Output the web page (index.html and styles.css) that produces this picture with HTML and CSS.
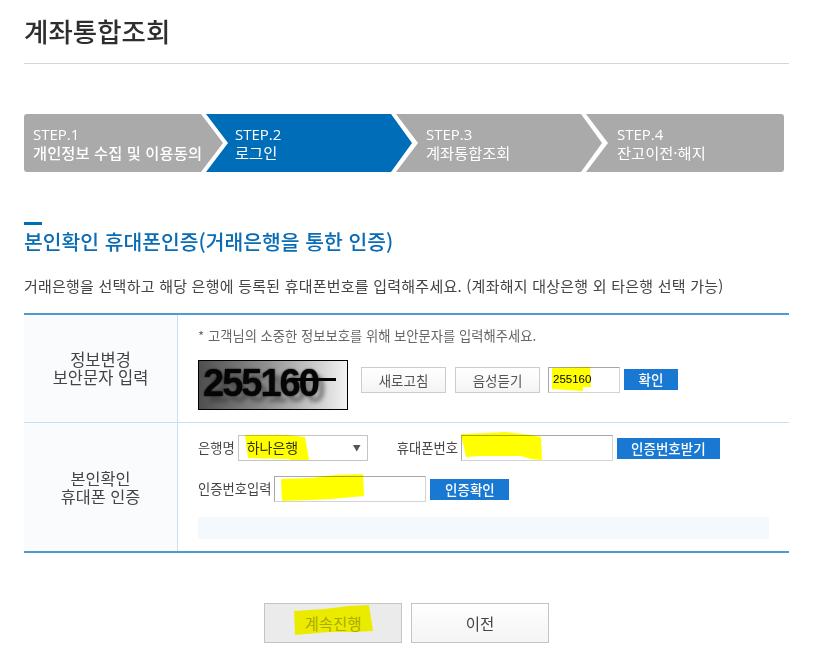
FILE: index.html
```html
<!DOCTYPE html>
<html lang="ko">
<head>
    <meta charset="UTF-8">
    <meta name="viewport" content="width=device-width, initial-scale=1.0">
    <title>계좌통합조회</title>
    <link rel="stylesheet" href="styles.css">
</head>
<body>
    <div class="container">
        <h1 class="page-title">계좌통합조회</h1>

        <ol class="steps">
            <li class="step step-first">
                <span class="step-no">STEP.1</span>
                <strong class="step-name">개인정보 수집 및 이용동의</strong>
            </li>
            <li class="step step-active">
                <span class="step-no">STEP.2</span>
                <span class="step-name">로그인</span>
            </li>
            <li class="step">
                <span class="step-no">STEP.3</span>
                <span class="step-name">계좌통합조회</span>
            </li>
            <li class="step step-last">
                <span class="step-no">STEP.4</span>
                <span class="step-name">잔고이전·해지</span>
            </li>
        </ol>

        <h2 class="section-title">본인확인 휴대폰인증(거래은행을 통한 인증)</h2>
        <p class="section-desc">거래은행을 선택하고 해당 은행에 등록된 휴대폰번호를 입력해주세요. (계좌해지 대상은행 외 타은행 선택 가능)</p>

        <div class="form-table">
            <div class="form-row row-captcha">
                <div class="form-head">정보변경<br>보안문자 입력</div>
                <div class="form-body">
                    <p class="note">* 고객님의 소중한 정보보호를 위해 보안문자를 입력해주세요.</p>
                    <div class="captcha-line">
                        <div class="captcha">
                            <span class="captcha-text">255160</span>
                            <span class="captcha-strike"></span>
                        </div>
                        <button class="btn-line btn-refresh" type="button">새로고침</button>
                        <button class="btn-line btn-audio" type="button">음성듣기</button>
                        <div class="field field-captcha">
                            <input class="input" type="text" value="255160">
                            <svg class="marker marker-captcha" viewBox="0 0 39 24"><polygon points="0,1 38,0 39,20 31,20 31,24 0,22"/></svg>
                        </div>
                        <button class="btn-blue" type="button">확인</button>
                    </div>
                </div>
            </div>
            <div class="form-row row-phone">
                <div class="form-head">본인확인<br>휴대폰 인증</div>
                <div class="form-body">
                    <div class="field-line">
                        <label class="label">은행명</label>
                        <div class="field field-bank">
                            <div class="select-box">하나은행<span class="select-arrow">▼</span></div>
                            <svg class="marker marker-bank" viewBox="0 0 64 25"><polygon points="0,0 43,0 60,2 64,25 45,25 44,24 3,23"/></svg>
                        </div>
                        <label class="label label-phone">휴대폰번호</label>
                        <div class="field field-phone">
                            <input class="input" type="text">
                            <svg class="marker marker-phone" viewBox="0 0 81 28"><polygon points="0,2 25,1 45,0 70,3 80,5 81,28 70,27 60,24 20,24 5,25"/></svg>
                        </div>
                        <button class="btn-blue btn-request" type="button">인증번호받기</button>
                    </div>
                    <div class="field-line">
                        <label class="label">인증번호입력</label>
                        <div class="field field-code">
                            <input class="input" type="text">
                            <svg class="marker marker-code" viewBox="0 0 83 27"><polygon points="0,5 30,4 55,1 82,0 83,22 50,25 30,26 1,27"/></svg>
                        </div>
                        <button class="btn-blue btn-verify" type="button">인증확인</button>
                    </div>
                    <div class="info-box"></div>
                </div>
            </div>
        </div>

        <div class="actions">
            <div class="field">
                <button class="btn-big btn-disabled" type="button">계속진행</button>
                <svg class="marker marker-next" viewBox="0 0 79 30"><polygon points="0,6 30,4 55,1 75,0 79,26 60,27 35,27 1,30"/></svg>
            </div>
            <button class="btn-big" type="button">이전</button>
        </div>
    </div>
</body>
</html>
```

FILE: styles.css
```css
* {
    box-sizing: border-box;
}

body {
    font-family: "Noto Sans CJK KR", "Noto Sans", sans-serif;
    background-color: #ffffff;
    color: #444444;
    margin: 0;
    padding: 0;
}

button, input {
    font-family: inherit;
}

.container {
    width: 765px;
    margin-left: 24px;
}

.page-title {
    height: 64px;
    margin: 0;
    padding-top: 11px;
    font-size: 26.5px;
    line-height: 40px;
    font-weight: 500;
    color: #2e2e2e;
    border-bottom: 1px solid #d6d6d6;
}

/* step bar */
.steps {
    display: flex;
    width: 760px;
    height: 58px;
    margin: 50px 0 0;
    padding: 0;
    list-style: none;
}

.step {
    width: 206px;
    height: 58px;
    margin-left: -16px;
    padding: 12px 0 0 30px;
    background-color: #aaaaaa;
    color: #ffffff;
    clip-path: polygon(0 0, calc(100% - 21px) 0, 100% 29px, calc(100% - 21px) 58px, 0 58px, 22px 29px);
}

.step-first {
    width: 199px;
    margin-left: 0;
    padding-left: 9px;
    border-radius: 3px 0 0 3px;
    clip-path: polygon(0 0, calc(100% - 22px) 0, 100% 29px, calc(100% - 22px) 58px, 0 58px);
}

.step-active {
    margin-left: -17px;
    padding-left: 29px;
    background-color: #006db8;
}

.step-last {
    width: 198px;
    padding-left: 31px;
    border-radius: 0 3px 3px 0;
    clip-path: polygon(0 0, 100% 0, 100% 58px, 0 58px, 22px 29px);
}

.step-no, .step-name {
    display: block;
    white-space: nowrap;
}

.step-no {
    font-family: "Open Sans", sans-serif;
    font-size: 15px;
    line-height: 17px;
}

.step-name {
    font-size: 15.3px;
    line-height: 18px;
}

.step-first .step-name {
    font-weight: 500;
    letter-spacing: 0.1px;
}

/* section heading */
.section-title {
    margin: 47px 0 0;
    padding-top: 3px;
    font-size: 20.4px;
    line-height: 32px;
    font-weight: 500;
    color: #0a6cb4;
}

.section-title::before {
    content: "";
    display: block;
    width: 18px;
    height: 3px;
    background-color: #006db8;
}

.section-desc {
    margin: 18px 0 0;
    font-size: 15px;
    line-height: 22px;
    letter-spacing: 0.23px;
    color: #444444;
    white-space: nowrap;
}

/* form table */
.form-table {
    margin-top: 16px;
    border-top: 2px solid #4f9bd1;
    border-bottom: 2px solid #4f9bd1;
}

.form-row {
    display: flex;
}

.row-captcha {
    height: 108px;
    border-bottom: 1px solid #c8e0f2;
}

.row-phone {
    height: 128px;
}

.form-head {
    display: flex;
    align-items: center;
    justify-content: center;
    width: 154px;
    flex-shrink: 0;
    background-color: #f9fbfd;
    border-right: 1px solid #c8e0f2;
    font-size: 16.3px;
    line-height: 18px;
    color: #444444;
    text-align: center;
}

.row-captcha .form-head {
    padding-bottom: 2px;
    font-size: 16.5px;
}

.form-body {
    flex: 1;
    padding-left: 20px;
    padding-right: 20px;
}

.row-captcha .form-body {
    padding-top: 12px;
}

.row-phone .form-body {
    padding-top: 12px;
}

.note {
    margin: 0;
    font-size: 13.3px;
    line-height: 18px;
    color: #666666;
}

.captcha-line {
    display: flex;
    align-items: flex-start;
    margin-top: 15px;
}

.captcha {
    position: relative;
    overflow: hidden;
    width: 150px;
    height: 50px;
    margin-right: 13px;
    padding: 3px 0 0 4px;
    border: 1px solid #000000;
    background: linear-gradient(90deg, #4e4e4e, #8f8f8f 45%, #f2f2f2);
}

.captcha-text {
    display: block;
    font-family: "Liberation Sans", sans-serif;
    font-size: 38px;
    line-height: 38px;
    font-weight: bold;
    letter-spacing: -2px;
    color: #050505;
    text-shadow: 0 0 2px #000000, 6px 6px 4px rgba(50, 50, 50, 0.55);
}

.captcha-strike {
    position: absolute;
    left: 90px;
    top: 17px;
    width: 47px;
    height: 3px;
    background-color: #000000;
}

.btn-line {
    width: 85px;
    height: 26px;
    margin-top: 7px;
    margin-right: 9px;
    padding: 0;
    border: 1px solid #cccccc;
    background: linear-gradient(#ffffff, #f4f4f4);
    font-size: 13.5px;
    color: #555555;
}

.btn-audio {
    margin-right: 8px;
}

.field {
    position: relative;
}

.field-captcha {
    margin-top: 7px;
    margin-right: 4px;
}

.input {
    display: block;
    height: 26px;
    padding: 0 4px 3px;
    border: 1px solid;
    border-color: #a8a8a8 #d4d4d4 #d4d4d4 #a8a8a8;
    background-color: #ffffff;
    font-family: "Liberation Sans", sans-serif;
    font-size: 11.5px;
    color: #000000;
    outline: none;
}

.field-captcha .input {
    width: 72px;
}

.field-phone .input, .field-code .input {
    width: 152px;
}

.btn-blue {
    height: 21px;
    padding: 0;
    border: none;
    background-color: #1878d2;
    color: #ffffff;
    font-size: 13.5px;
    font-weight: 500;
    line-height: 21px;
}

.row-captcha .btn-blue {
    width: 54px;
    margin-top: 9px;
}

.btn-request {
    width: 103px;
    margin-left: 4px;
}

.btn-verify {
    width: 79px;
    margin-left: 4px;
}

.field-line {
    display: flex;
    align-items: center;
    height: 26px;
    margin-bottom: 15px;
}

.label {
    font-size: 13.3px;
    line-height: 26px;
    color: #444444;
    white-space: nowrap;
}

.label-phone {
    margin-left: 29px;
    margin-right: 3px;
}

.field-bank {
    margin-left: 3px;
}

.field-code {
    margin-left: 3px;
}

.select-box {
    position: relative;
    width: 130px;
    height: 26px;
    padding-left: 8px;
    border: 1px solid #c4c4c4;
    font-size: 14px;
    line-height: 23px;
    color: #333333;
}

.select-arrow {
    position: absolute;
    right: 6px;
    top: 0;
    font-size: 8px;
    line-height: 24px;
    color: #555555;
}

.info-box {
    width: 571px;
    height: 22px;
    background-color: #f3f9fd;
}

/* hand drawn yellow marks over the fields */
.marker {
    position: absolute;
    fill: #ffff00;
    mix-blend-mode: multiply;
    pointer-events: none;
}

.marker-captcha {
    left: 4px;
    top: 0;
    width: 39px;
    height: 24px;
}

.marker-bank {
    left: 7px;
    top: 0;
    width: 64px;
    height: 25px;
}

.marker-phone {
    left: 0;
    top: -3px;
    width: 81px;
    height: 28px;
}

.marker-code {
    left: 7px;
    top: -2px;
    width: 83px;
    height: 27px;
}

.marker-next {
    left: 30px;
    top: 2px;
    width: 79px;
    height: 30px;
}

/* bottom buttons */
.actions {
    display: flex;
    justify-content: center;
    gap: 9px;
    margin-top: 50px;
}

.btn-big {
    display: block;
    width: 138px;
    height: 40px;
    padding: 0;
    border: 1px solid #c4c4c4;
    background: linear-gradient(#ffffff, #f4f4f4);
    font-size: 15.5px;
    color: #444444;
}

.btn-disabled {
    background: #ebebeb;
    color: #aaaaaa;
}
```
